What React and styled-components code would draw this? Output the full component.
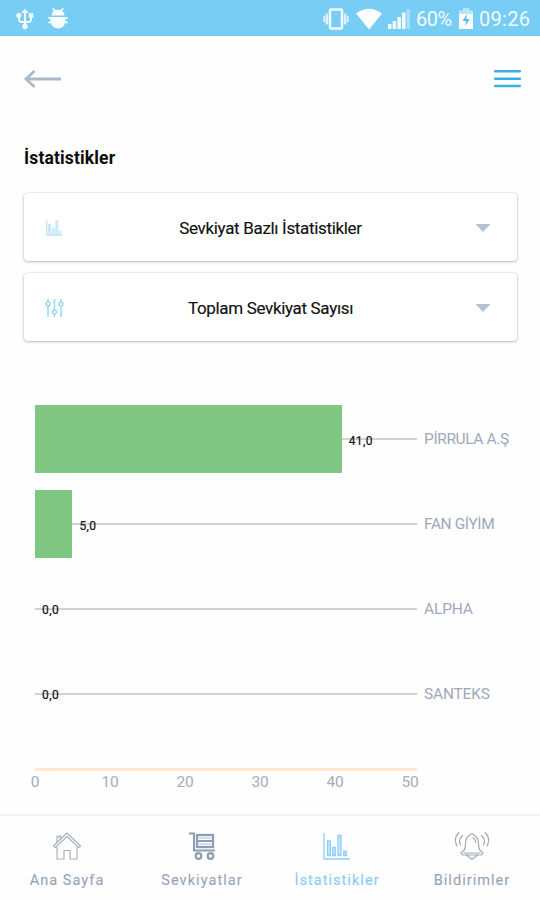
import React from "react";
import styled, { createGlobalStyle } from "styled-components";

const GlobalStyle = createGlobalStyle`
  * { box-sizing: border-box; }
  body {
    margin: 0;
    background: #fefefe;
    font-family: Roboto, "Liberation Sans", sans-serif;
  }
  svg { display: block; flex: none; }
`;

const Screen = styled.div`
  width: 540px;
  height: 900px;
  display: flex;
  flex-direction: column;
  overflow: hidden;
`;

const StatusBar = styled.header`
  height: 36px;
  flex: none;
  display: flex;
  align-items: center;
  justify-content: space-between;
  padding: 2px 8px 0 16px;
  background: #78cdf5;
  color: #f2fbff;
`;

const StatusGroup = styled.div`
  display: flex;
  align-items: center;
  gap: ${(p) => p.$gap}px;
`;

const StatusText = styled.span`
  font-size: 20px;
  line-height: 24px;
  width: ${(p) => p.$width}px;
  letter-spacing: ${(p) => p.$spacing}px;
  white-space: nowrap;
`;

const Toolbar = styled.div`
  height: 85px;
  flex: none;
  display: flex;
  align-items: center;
  justify-content: space-between;
  padding: 0 19px 0 24px;
`;

const IconButton = styled.button`
  border: 0;
  padding: 0;
  background: none;
`;

const Title = styled.h1`
  margin: 25px 0 23px 24px;
  height: 24px;
  font-size: 17.5px;
  line-height: 24px;
  font-weight: 700;
  letter-spacing: 0.15px;
  color: #0c0c0c;
`;

const Filters = styled.div`
  display: flex;
  flex-direction: column;
  gap: 12px;
  padding: 0 23px 0 24px;
`;

const Select = styled.button`
  height: 68px;
  display: grid;
  grid-template-columns: 20px 1fr 16px;
  align-items: center;
  padding: 1px 26px 0 20px;
  border: 0;
  border-radius: 4px;
  background: #fff;
  box-shadow: 0 0 2px rgba(0, 0, 0, 0.18), 0 1px 3px rgba(0, 0, 0, 0.22);
  font: 400 17px/24px Roboto, sans-serif;
  color: #111;
  -webkit-text-stroke: 0.15px #111;
`;

const SelectLabel = styled.span`
  text-align: center;
  letter-spacing: ${(p) => p.$spacing}px;
  padding-left: 2px;
`;

const Chart = styled.section`
  margin: 56px 0 0 35px;
  display: flex;
  flex-direction: column;
`;

const ChartRow = styled.div`
  height: 84.75px;
  display: grid;
  grid-template-columns: 382px 1fr;
  column-gap: 7px;
  align-items: center;
`;

const Track = styled.div`
  height: 68px;
  display: flex;
  align-items: center;
  background: linear-gradient(#d2d2d2, #d2d2d2) 0 50% / 100% 2px no-repeat;
`;

const Bar = styled.div`
  height: 68px;
  background: #81c784;
`;

const Value = styled.span`
  margin: 3px 0 0 7px;
  font-size: 12px;
  line-height: 14px;
  letter-spacing: 0.4px;
  color: #111;
  -webkit-text-stroke: 0.2px #111;
`;

const Category = styled.span`
  font-size: 15.5px;
  line-height: 20px;
  letter-spacing: ${(p) => p.$spacing}px;
  color: #9ea9ba;
  white-space: nowrap;
`;

const Axis = styled.div`
  margin-top: 32px;
  width: 382px;
  height: 3px;
  background: #ffe8cc;
`;

const Ticks = styled.div`
  margin: 1px 0 0 -37.5px;
  display: grid;
  grid-template-columns: repeat(6, 75px);
  text-align: center;
  font-size: 15.5px;
  letter-spacing: -0.3px;
  line-height: 20px;
  color: #a4adbb;
`;

const BottomNav = styled.nav`
  margin-top: auto;
  height: 86px;
  flex: none;
  display: grid;
  grid-template-columns: repeat(4, 135px);
  border-top: 2px solid #f2f2f3;
  padding-top: 15px;
`;

const NavItem = styled.a`
  display: flex;
  flex-direction: column;
  align-items: center;
  gap: 8px;
  padding-right: 1px;
  color: ${(p) => (p.$active ? "#86cdf3" : "#96a4b7")};
  font-size: 14.5px;
  line-height: 24px;
  letter-spacing: ${(p) => p.$spacing}px;
  -webkit-text-stroke: 0.1px currentColor;
`;

const UsbIcon = () => (
  <svg width="18" height="22" viewBox="0 0 18 22" fill="none" stroke="#f5fcff" strokeWidth="2">
    <path d="M9 4v14M3 8v3.500q0 2 2.500 2.500H12.500q2.500-.5 2.500-2.500V8" />
    <path d="M5.500 5 9 .5 12.500 5Z" fill="#f5fcff" stroke="none" />
    <circle cx="2.800" cy="7.500" r="2.500" fill="#f5fcff" stroke="none" />
    <path d="M12.800 5.200h4.600v4.600h-4.600z" fill="#f5fcff" stroke="none" />
    <circle cx="9" cy="18.500" r="2.700" fill="#f5fcff" stroke="none" />
  </svg>
);

const DebugIcon = () => (
  <svg width="20" height="22" viewBox="0 0 20 22" fill="#f8fdff">
    <path d="M3.500 7.500C3.500 5.500 4.500 4 6 3L4 .8 5 0l2.800 2q2.200-.5 4.400 0L15 0l1 .8L14 3c1.500 1 2.500 2.500 2.500 4.500Z" />
    <path d="M2.500 9h15v4c0 4.500-4 7.500-7.500 7.500S2.500 17.500 2.500 13Z" />
    <path d="M.3 9.700 4 10.700M19.700 9.700 16 10.700M.3 14.700l4-.7M19.700 14.700l-4-.7" stroke="#f8fdff" strokeWidth="1.700" />
  </svg>
);

const VibrateIcon = () => (
  <svg width="28" height="22" viewBox="0 0 28 22" fill="none" stroke="#f3fbff">
    <rect x="8" y="1.500" width="12" height="19" rx="1" strokeWidth="2.500" />
    <path d="M4.800 5.500v11M23.200 5.500v11" strokeWidth="2.600" opacity=".8" />
    <path d="M2.200 8v6M25.800 8v6" strokeWidth="2" opacity=".7" />
  </svg>
);

const WifiIcon = () => (
  <svg width="26" height="22" viewBox="0 0 26 22" fill="#fff">
    <path d="M0 5.500Q13-4 26 5.500L13 21.500Z" />
  </svg>
);

const SignalIcon = () => (
  <svg width="22" height="22" viewBox="0 0 22 22" fill="#f3fbff">
    <path d="M0 16h3.500v5H0zM4.700 13h3.500v8H4.700zM9.400 9h3.500v12H9.400zM14 4.500h3.500V21H14z" />
    <path d="M18.500 1H22v20h-3.500z" opacity=".4" />
  </svg>
);

const BatteryIcon = () => (
  <svg width="14" height="22" viewBox="0 0 14 22">
    <path d="M4 0h6v2.500h4V7H0V2.500h4Z" fill="#b8e5fb" />
    <path d="M0 6h14v15H0Z" fill="#fff" />
    <path d="M8 6 3.500 13H7l-1 5 5-7H7.500Z" fill="#62bde8" />
  </svg>
);

const BackIcon = () => (
  <svg width="38" height="20" viewBox="0 0 38 20" fill="none" stroke="#a9b9c8" strokeWidth="2.800">
    <path d="M37 10H2.500M10.500 2 2 10l8.500 8" />
  </svg>
);

const MenuIcon = () => (
  <svg width="27" height="20" viewBox="0 0 27 20" stroke="#38b0de" strokeWidth="2.600" strokeLinecap="round">
    <path d="M1.200 2.200h24.600M1.200 9.700h24.600M1.200 17h24.600" />
  </svg>
);

const SmallChartIcon = () => (
  <svg width="20" height="20" viewBox="0 0 20 20" fill="#c9e8fa">
    <path d="M2 2h1.500v14H18v2H2Z" />
    <path d="M4 6h3v10H4zM8 9.500h2.700V16H8zM11.300 2.500h3V16h-3zM14.800 12.500h2.400V16h-2.400z" />
  </svg>
);

const SlidersIcon = () => (
  <svg width="20" height="20" viewBox="0 0 20 20" fill="none" stroke="#9bd8f6" strokeWidth="1.500">
    <path d="M4 1v3M4 8v11M10.500 1v11M10.500 16v3M17 1v3M17 8v11" />
    <circle cx="4" cy="6" r="2" />
    <circle cx="10.500" cy="14" r="2" />
    <circle cx="17" cy="6" r="2" />
  </svg>
);

const Caret = () => (
  <svg width="16" height="8" viewBox="0 0 16 8">
    <path d="M.5 0h15L8 8Z" fill="#b5c1d0" />
  </svg>
);

const HomeIcon = () => (
  <svg width="30" height="30" viewBox="0 0 30 30" fill="none" stroke="#a4adb8" strokeWidth="1.100" strokeLinejoin="round">
    <path d="M1.500 15 15 2l13.500 13-1.700 1.700L15 5.500 3.200 16.700Z" />
    <path d="M5 15.500V28h7v-8.500h6V28h7V15.500M5 11.500V5h4v3" />
    <path d="M6 6.500h2" stroke="#91bfe8" />
  </svg>
);

const CartIcon = () => (
  <svg width="30" height="30" viewBox="0 0 30 30" fill="none" stroke="#8d9db2" strokeWidth="2">
    <path d="M2 2.500h5V19.500h21" />
    <rect x="10" y="4" width="16" height="12" strokeWidth="2.300" />
    <path d="M10 10h16" />
    <path d="M12 7h12M12 13h12" stroke="#bed6ed" strokeWidth="1.500" />
    <circle cx="11.500" cy="25" r="2.800" strokeWidth="2.200" />
    <circle cx="23.500" cy="25" r="2.800" strokeWidth="2.200" />
  </svg>
);

const StatsIcon = () => (
  <svg width="30" height="30" viewBox="0 0 30 30" fill="none" stroke="#8fcff3" strokeWidth="1.300">
    <path d="M2 2v26h26" />
    <path d="M5.500 10h2.800v14.500H5.500zM10.700 16.500h2.600v8h-2.600zM16 4.500h3v20h-3zM21.700 20.500h2.600v4h-2.600z" fill="#c9e9fb" />
  </svg>
);

const BellIcon = () => (
  <svg width="36" height="30" viewBox="0 0 36 30" fill="none" stroke="#a3a9b3" strokeWidth="1.200" strokeLinecap="round">
    <path d="M16.200 4a1.900 1.900 0 0 1 3.600 0q4.500 2 4.700 8.500l.5 5q.7 2.500 4 4.300L27.500 24h-19L7 21.800q3.300-1.800 4-4.300l.5-5Q11.700 6 16.200 4Z" />
    <path d="M12.500 24l5.500 4.500 5.500-4.500M10 22h16M19 6.500q2.500 1.500 2.800 5" />
    <path d="M8.500 4.500q-4.500 4-2 9.500M5 1.500q-6 6-2 13.500M27.500 4.500q4.500 4 2 9.500M31 1.500q6 6 2 13.500" />
  </svg>
);

const rows = [
  { name: "PİRRULA A.Ş", value: 41, label: "41,0", spacing: -0.38 },
  { name: "FAN GİYİM", value: 5, label: "5,0", spacing: -0.4 },
  { name: "ALPHA", value: 0, label: "0,0", spacing: -0.15 },
  { name: "SANTEKS", value: 0, label: "0,0", spacing: -0.2 },
];

const tabs = [
  { label: "Ana Sayfa", Icon: HomeIcon, spacing: 1.05 },
  { label: "Sevkiyatlar", Icon: CartIcon, spacing: 1.05 },
  { label: "İstatistikler", Icon: StatsIcon, active: true, spacing: 1.05 },
  { label: "Bildirimler", Icon: BellIcon, spacing: 1.05 },
];

export default function App() {
  return (
    <Screen>
      <GlobalStyle />
      <StatusBar>
        <StatusGroup $gap={14}>
          <UsbIcon />
          <DebugIcon />
        </StatusGroup>
        <StatusGroup $gap={6}>
          <VibrateIcon />
          <WifiIcon />
          <SignalIcon />
          <StatusText $width={37} $spacing={-0.5}>60%</StatusText>
          <BatteryIcon />
          <StatusText $width={53} $spacing={0.3}>09:26</StatusText>
        </StatusGroup>
      </StatusBar>
      <Toolbar>
        <IconButton aria-label="Geri"><BackIcon /></IconButton>
        <IconButton aria-label="Menü"><MenuIcon /></IconButton>
      </Toolbar>
      <Title>İstatistikler</Title>
      <Filters>
        <Select>
          <SmallChartIcon />
          <SelectLabel $spacing={-0.33}>Sevkiyat Bazlı İstatistikler</SelectLabel>
          <Caret />
        </Select>
        <Select>
          <SlidersIcon />
          <SelectLabel $spacing={-0.33}>Toplam Sevkiyat Sayısı</SelectLabel>
          <Caret />
        </Select>
      </Filters>
      <Chart>
        {rows.map((row) => (
          <ChartRow key={row.name}>
            <Track>
              <Bar style={{ width: row.value * 7.48 }} />
              <Value>{row.label}</Value>
            </Track>
            <Category $spacing={row.spacing}>{row.name}</Category>
          </ChartRow>
        ))}
        <Axis />
        <Ticks>
          {[0, 10, 20, 30, 40, 50].map((n) => <span key={n}>{n}</span>)}
        </Ticks>
      </Chart>
      <BottomNav>
        {tabs.map(({ label, Icon, active, spacing }) => (
          <NavItem key={label} $active={active} $spacing={spacing}>
            <Icon />
            <span>{label}</span>
          </NavItem>
        ))}
      </BottomNav>
    </Screen>
  );
}
